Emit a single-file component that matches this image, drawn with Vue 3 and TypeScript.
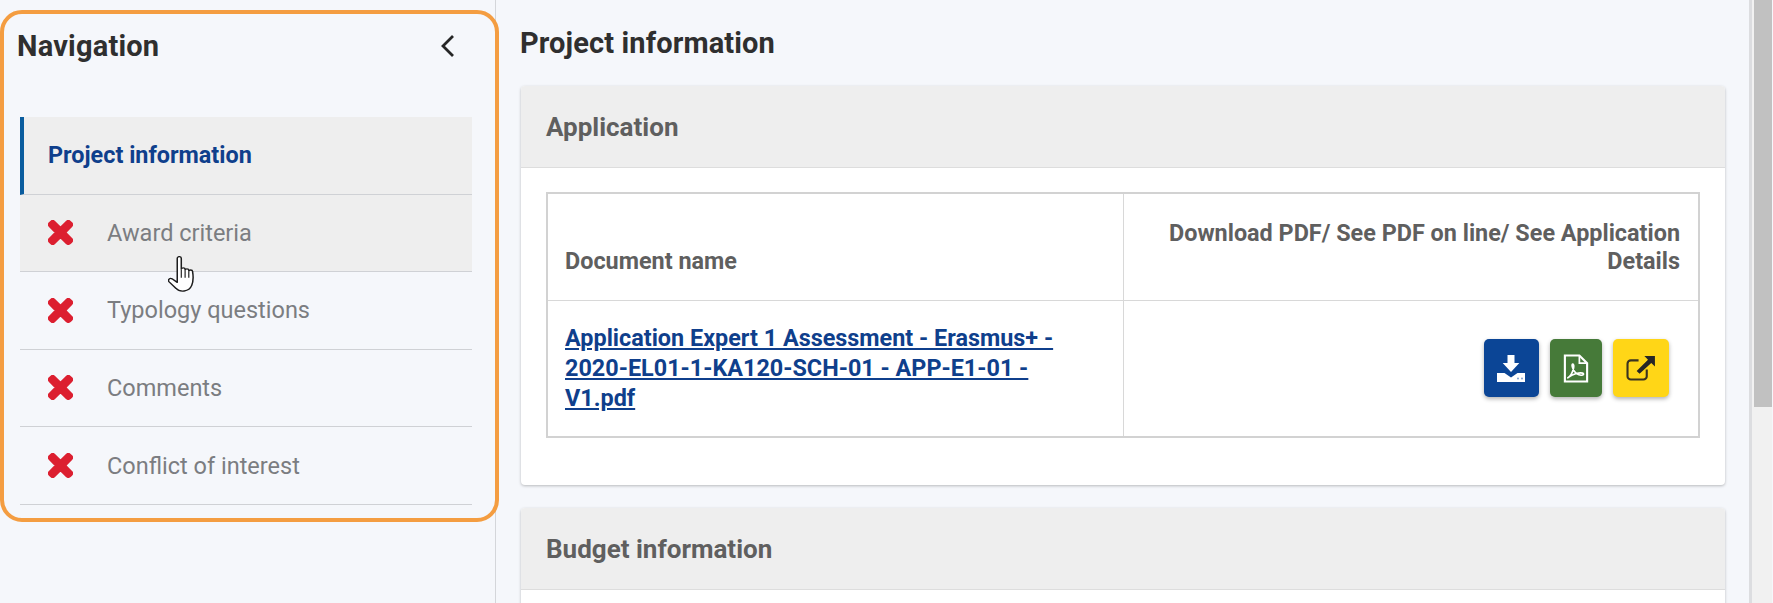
<script setup lang="ts">
const navItems: string[] = ['Award criteria', 'Typology questions', 'Comments', 'Conflict of interest']
</script>

<template>
  <div class="page">
    <aside class="sidebar">
      <div class="nav-head">
        <h2>Navigation</h2>
        <svg class="chev" width="16" height="24" viewBox="0 0 16 24"><path d="M13 2 3 12l10 10" fill="none" stroke="#262626" stroke-width="2.800" /></svg>
      </div>
      <ul class="nav">
        <li class="active"><span>Project information</span></li>
        <li v-for="(item, i) in navItems" :key="item" :class="{ hover: i === 0, last: i === 3 }">
          <svg class="x" width="25" height="25" viewBox="-20 60 392 392"><path fill="#dc1f30" stroke="#dc1f30" stroke-width="42" stroke-linejoin="round" d="M242.72 256l100.07-100.07c12.28-12.28 12.28-32.19 0-44.48l-22.24-22.24c-12.28-12.28-32.19-12.28-44.48 0L176 189.28 75.93 89.21c-12.28-12.28-32.19-12.28-44.48 0L9.21 111.45c-12.28 12.28-12.28 32.19 0 44.48L109.28 256 9.21 356.07c-12.28 12.28-12.28 32.19 0 44.48l22.24 22.24c12.28 12.28 32.2 12.28 44.48 0L176 322.72l100.07 100.07c12.28 12.28 32.2 12.28 44.48 0l22.24-22.24c12.28-12.28 12.28-32.19 0-44.48L242.72 256z" /></svg>
          <span>{{ item }}</span>
        </li>
      </ul>
    </aside>

    <main class="main">
      <h1>Project information</h1>
      <section class="card">
        <header>Application</header>
        <div class="card-body">
          <table>
            <thead>
              <tr>
                <th class="c1">Document name</th>
                <th class="c2">Download PDF/ See PDF on line/ See Application Details</th>
              </tr>
            </thead>
            <tbody>
              <tr>
                <td class="c1"><a href="#">Application Expert 1 Assessment - Erasmus+ - 2020-EL01-1-KA120-SCH-01 - APP-E1-01 - V1.pdf</a></td>
                <td class="c2">
                  <div class="btns">
                    <button class="b-blue" type="button" aria-label="Download">
                      <svg width="28" height="27" viewBox="0 0 28 27"><path fill="#fff" d="M10.500 0h7v8h4.800L14 17 5.700 8h4.800z" /><path fill="#fff" d="M0 18h7.500l6.500 4.500 6.500-4.500H28v9H0z" /><circle cx="21" cy="23.500" r="1" fill="#7f9fd0" /><circle cx="25" cy="23.500" r="1" fill="#7f9fd0" /></svg>
                    </button>
                    <button class="b-green" type="button" aria-label="PDF">
                      <svg width="26" height="29" viewBox="0 0 26 30"><path fill="none" stroke="#fff" stroke-width="2.200" d="M1.500 1.500h15l8 8v19h-23z" /><path fill="none" stroke="#fff" stroke-width="1.800" d="M16.500 1.500v8h8" /><path fill="none" stroke="#fff" stroke-width="1.700" d="M4 25c3-1.500 5.500-6 6.500-10.500.4-2 .2-4-.8-4-1.300 0-.8 3.500 1 6.500 1.700 2.800 4.500 4.800 7.500 5 2.500.2 3.500-1.600 1.700-2.200-3-1-9.500.5-15.900 5.200z" /></svg>
                    </button>
                    <button class="b-yellow" type="button" aria-label="Open details">
                      <svg width="29" height="25" viewBox="0 0 30 26"><path fill="none" stroke="#3a3320" stroke-width="2.200" d="M13 4.500H5A3.500 3.500 0 0 0 1.500 8v13A3.500 3.500 0 0 0 5 24.500h13a3.500 3.500 0 0 0 3.500-3.500v-7" /><path fill="#262626" d="M19 0h11v11l-3.800-3.800L14 18.500l-3-3L22.800 3.800z" /></svg>
                    </button>
                  </div>
                </td>
              </tr>
            </tbody>
          </table>
        </div>
      </section>
      <section class="card">
        <header>Budget information</header>
        <div class="card-body tall"></div>
      </section>
    </main>

    <div class="scrollbar"><div class="thumb"></div></div>

    <div class="frame"></div>
    <svg class="cursor" width="26" height="36" viewBox="0.500 0.500 22.500 35.500" preserveAspectRatio="none">
      <path fill="#fff" stroke="#1d1d1d" stroke-width="1.300" stroke-linejoin="round" d="M8.500 3c0-2.500 3.500-2.500 3.500 0v10.500c0-1.800 3.300-1.800 3.300 0v1c0-1.700 3.200-1.700 3.200 0v1c0-1.600 3.200-1.600 3.200 0 .8 5 .8 10-.7 14-1 3-3 5-6.500 5.500-3 .4-5.500-.5-7-2.500L1.500 26c-1.500-2 .5-4.200 2.500-3l4.500 3.500z" />
      <path fill="none" stroke="#1d1d1d" stroke-width="1" d="M12 14v8M15.300 15v7M18.500 16v6" />
    </svg>
  </div>
</template>

<style>
html, body { margin: 0; background: #f5f7fb; overflow: hidden; }
</style>

<style scoped>
.page {
  position: relative;
  display: flex;
  width: 1773px;
  height: 603px;
  overflow: hidden;
  background: #f5f7fb;
  font-family: Roboto, "Liberation Sans", sans-serif;
}
.sidebar {
  box-sizing: border-box;
  flex: none;
  width: 496px;
  padding: 0 23px 0 20px;
  border-right: 1px solid #d4d6da;
}
.nav-head {
  display: flex;
  align-items: center;
  justify-content: space-between;
  height: 92px;
  padding-right: 16px;
  margin-left: -3px;
  margin-bottom: 25px;
}
.nav-head h2 {
  margin: 0;
  font-size: 29px;
  font-weight: 700;
  letter-spacing: .2px;
  color: #2f2f2f;
}
.nav {
  list-style: none;
  margin: 0;
  padding: 0;
}
.nav li {
  box-sizing: border-box;
  display: flex;
  align-items: center;
  height: 77.500px;
  padding-left: 28px;
  border-bottom: 1.500px solid #cfd1d5;
  font-size: 23.500px;
  color: #7b7d81;
}
.nav li.active {
  padding-left: 24px;
  border-left: 4px solid #0a5c9e;
  background: #eeeeee;
  color: #0f3f8c;
  font-weight: 700;
  font-size: 23.400px;
}
.nav li.hover { background: #eeeeee; }
.nav li.last span { position: relative; top: 1px; }
.x { margin: 0 34px 0 0; }
.main {
  flex: 1;
  min-width: 0;
  padding-left: 24px;
}
.main h1 {
  margin: 0;
  height: 86px;
  line-height: 86px;
  font-size: 29px;
  font-weight: 700;
  letter-spacing: .12px;
  color: #2f2f2f;
}
.card {
  width: 1204px;
  margin-left: 1px;
  margin-bottom: 23px;
  background: #fff;
  border-radius: 4px;
  box-shadow: 0 1px 3px rgba(0, 0, 0, .25);
  overflow: hidden;
}
.card header {
  box-sizing: border-box;
  height: 82px;
  padding: 0 25px;
  line-height: 82px;
  font-size: 26px;
  font-weight: 700;
  color: #5f5f5f;
  background: #eeeeee;
  border-bottom: 1.500px solid #dddddd;
}
.card-body { padding: 24px 25px 47px; }
.card-body.tall { height: 200px; }
table {
  width: 100%;
  border-collapse: collapse;
  border: 2px solid #d2d2d2;
  table-layout: fixed;
  font-size: 23.400px;
}
th, td { padding: 0 18px 0 17px; border-left: 1.500px solid #d8d8d8; }
th:first-child, td:first-child { border-left: 0; }
.c1 { width: 50%; text-align: left; }
.c2 { text-align: right; }
th {
  height: 107px;
  vertical-align: bottom;
  padding-bottom: 24px;
  box-sizing: border-box;
  line-height: 28.500px;
  font-weight: 700;
  color: #5f5f5f;
  border-bottom: 1.500px solid #d8d8d8;
}
td { height: 135px; }
td a {
  display: block;
  padding-right: 40px;
  color: #0f3f8c;
  font-weight: 700;
  line-height: 30px;
  text-decoration: underline;
}
.btns {
  display: flex;
  justify-content: flex-end;
  gap: 11px;
  padding-right: 11px;
}
button {
  display: flex;
  align-items: center;
  justify-content: center;
  height: 58px;
  padding: 0;
  border: 0;
  border-radius: 5px;
  box-shadow: 0 2px 4px rgba(0, 0, 0, .3);
}
.b-blue { width: 55px; background: #0b4596; }
.b-green { width: 52px; background: #467a39; }
.b-yellow { width: 56.500px; background: #ffd617; }
.scrollbar {
  flex: none;
  width: 20px;
  margin-right: 1px;
  background: #f1f1f1;
  border-left: 3px solid #dcdde0;
  box-sizing: content-box;
  position: relative;
}
.thumb { height: 407px; margin-left: 2px; background: #c1c1c1; }
.frame {
  position: absolute;
  left: 0;
  top: 10px;
  box-sizing: border-box;
  width: 499px;
  height: 512px;
  border: 4px solid #f49d41;
  border-radius: 22px;
  pointer-events: none;
}
.cursor {
  position: absolute;
  left: 168px;
  top: 256px;
}
</style>
